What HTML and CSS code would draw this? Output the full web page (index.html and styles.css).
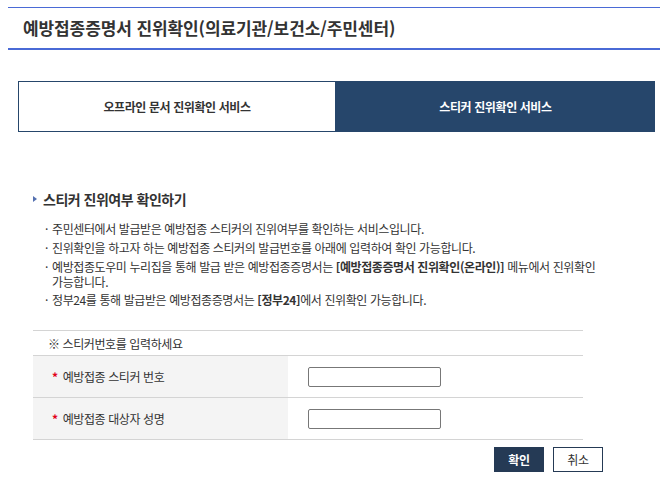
FILE: index.html
```html
<!DOCTYPE html>
<html lang="ko">
<head>
<meta charset="utf-8">
<title>예방접종증명서 진위확인</title>
<link rel="stylesheet" href="styles.css">
</head>
<body>
<div class="page">
  <header class="title-bar">
    <h1 class="title">예방접종증명서 진위확인(의료기관/보건소/주민센터)</h1>
  </header>
  <main class="content">
    <nav class="tabs">
      <a class="tab">오프라인 문서 진위확인 서비스</a>
      <a class="tab tab-active">스티커 진위확인 서비스</a>
    </nav>
    <section class="section">
      <h2 class="sec-title"><span class="arrow"></span>스티커 진위여부 확인하기</h2>
      <ul class="bullets">
        <li>주민센터에서 발급받은 예방접종 스티커의 진위여부를 확인하는 서비스입니다.</li>
        <li>진위확인을 하고자 하는 예방접종 스티커의 발급번호를 아래에 입력하여 확인 가능합니다.</li>
        <li>예방접종도우미 누리집을 통해 발급 받은 예방접종증명서는 <b>[예방접종증명서 진위확인(온라인)]</b> 메뉴에서 진위확인<br>가능합니다.</li>
        <li>정부24를 통해 발급받은 예방접종증명서는 <b>[정부24]</b>에서 진위확인 가능합니다.</li>
      </ul>
      <div class="form-table">
        <div class="note-row">※ 스티커번호를 입력하세요</div>
        <div class="row">
          <div class="label"><span class="req">*</span>예방접종 스티커 번호</div>
          <div class="field"><input class="input" type="text"></div>
        </div>
        <div class="row">
          <div class="label"><span class="req">*</span>예방접종 대상자 성명</div>
          <div class="field"><input class="input" type="text"></div>
        </div>
      </div>
      <div class="buttons">
        <button class="btn btn-primary">확인</button>
        <button class="btn btn-line">취소</button>
      </div>
    </section>
  </main>
</div>
</body>
</html>
```

FILE: styles.css
```css
* { box-sizing: border-box; }
html, body { margin: 0; padding: 0; background: #fff; }
body {
  font-family: "Noto Sans CJK KR", "Noto Sans", sans-serif;
  color: #333;
}
.page { padding: 7px 0 0 8px; }
.title-bar {
  border-top: 1px solid #4a6ad6;
  border-bottom: 2px solid #4a6ad6;
  height: 43px;
  display: flex;
  align-items: center;
  padding-left: 15px;
}
.title {
  margin: 0;
  font-size: 17px;
  font-weight: 700;
  letter-spacing: -0.1px;
  color: #333;
  line-height: 22px;
}
.content { padding: 31px 5px 0 10px; }
.tabs { display: flex; height: 51px; }
.tab {
  flex: 1 1 50%;
  display: flex;
  align-items: center;
  justify-content: center;
  font-size: 12px;
  font-weight: 700;
  letter-spacing: -0.4px;
  color: #333;
  border: 1px solid #26466b;
  border-right: none;
  background: #fff;
}
.tab:first-child { flex-basis: 317px; flex-grow: 0; }
.tab-active { background: #26466b; color: #fff; border-color: #26466b; }
.section { padding: 57px 0 0 15px; }
.sec-title {
  margin: 0;
  display: flex;
  align-items: center;
  font-size: 14px;
  font-weight: 700;
  letter-spacing: -0.5px;
  line-height: 20px;
  color: #333;
}
.arrow {
  width: 0; height: 0;
  border-top: 3.5px solid transparent;
  border-bottom: 3.5px solid transparent;
  border-left: 4px solid #5470b0;
  margin-right: 6px;
}
.bullets {
  list-style: none;
  margin: 12px 0 0 0;
  padding: 0 0 0 19px;
  font-size: 12px;
  letter-spacing: -0.4px;
  line-height: 15px;
  color: #333;
}
.bullets li { position: relative; margin-bottom: 4px; padding-right: 20px; }
.bullets li:nth-child(4) { margin-top: -1px; }
.bullets li::before {
  content: "·";
  position: absolute;
  left: -7px;
  top: 0;
}
.bullets b { font-weight: 700; }
.form-table {
  width: 550px;
  margin-top: 23px;
  border-top: 1px solid #d4d4d4;
  font-size: 12px;
  letter-spacing: -0.4px;
}
.note-row {
  height: 25px;
  display: flex;
  align-items: center;
  padding-left: 15px;
  border-bottom: 1px solid #d4d4d4;
}
.row {
  display: flex;
  height: 42px;
  border-bottom: 1px solid #d4d4d4;
}
.label {
  width: 255px;
  background: #f4f4f4;
  display: flex;
  align-items: center;
  padding-left: 19px;
}
.req { color: #e2001a; font-weight: 700; margin-right: 5px; }
.field {
  flex: 1;
  display: flex;
  align-items: center;
  padding-left: 20px;
}
.input {
  width: 133px;
  height: 20px;
  border: 1px solid #777;
  border-radius: 2px;
  padding: 0 4px;
  font: inherit;
}
.buttons {
  width: 570px;
  display: flex;
  justify-content: flex-end;
  gap: 9px;
  margin-top: 7px;
}
.btn {
  width: 50px;
  height: 25px;
  font-family: inherit;
  font-size: 12px;
  letter-spacing: -0.4px;
  cursor: pointer;
  padding: 0;
}
.btn-primary { background: #253a55; color: #fff; border: 1px solid #253a55; font-weight: 700; }
.btn-line { background: #fff; color: #333; border: 1px solid #253a55; }
```
